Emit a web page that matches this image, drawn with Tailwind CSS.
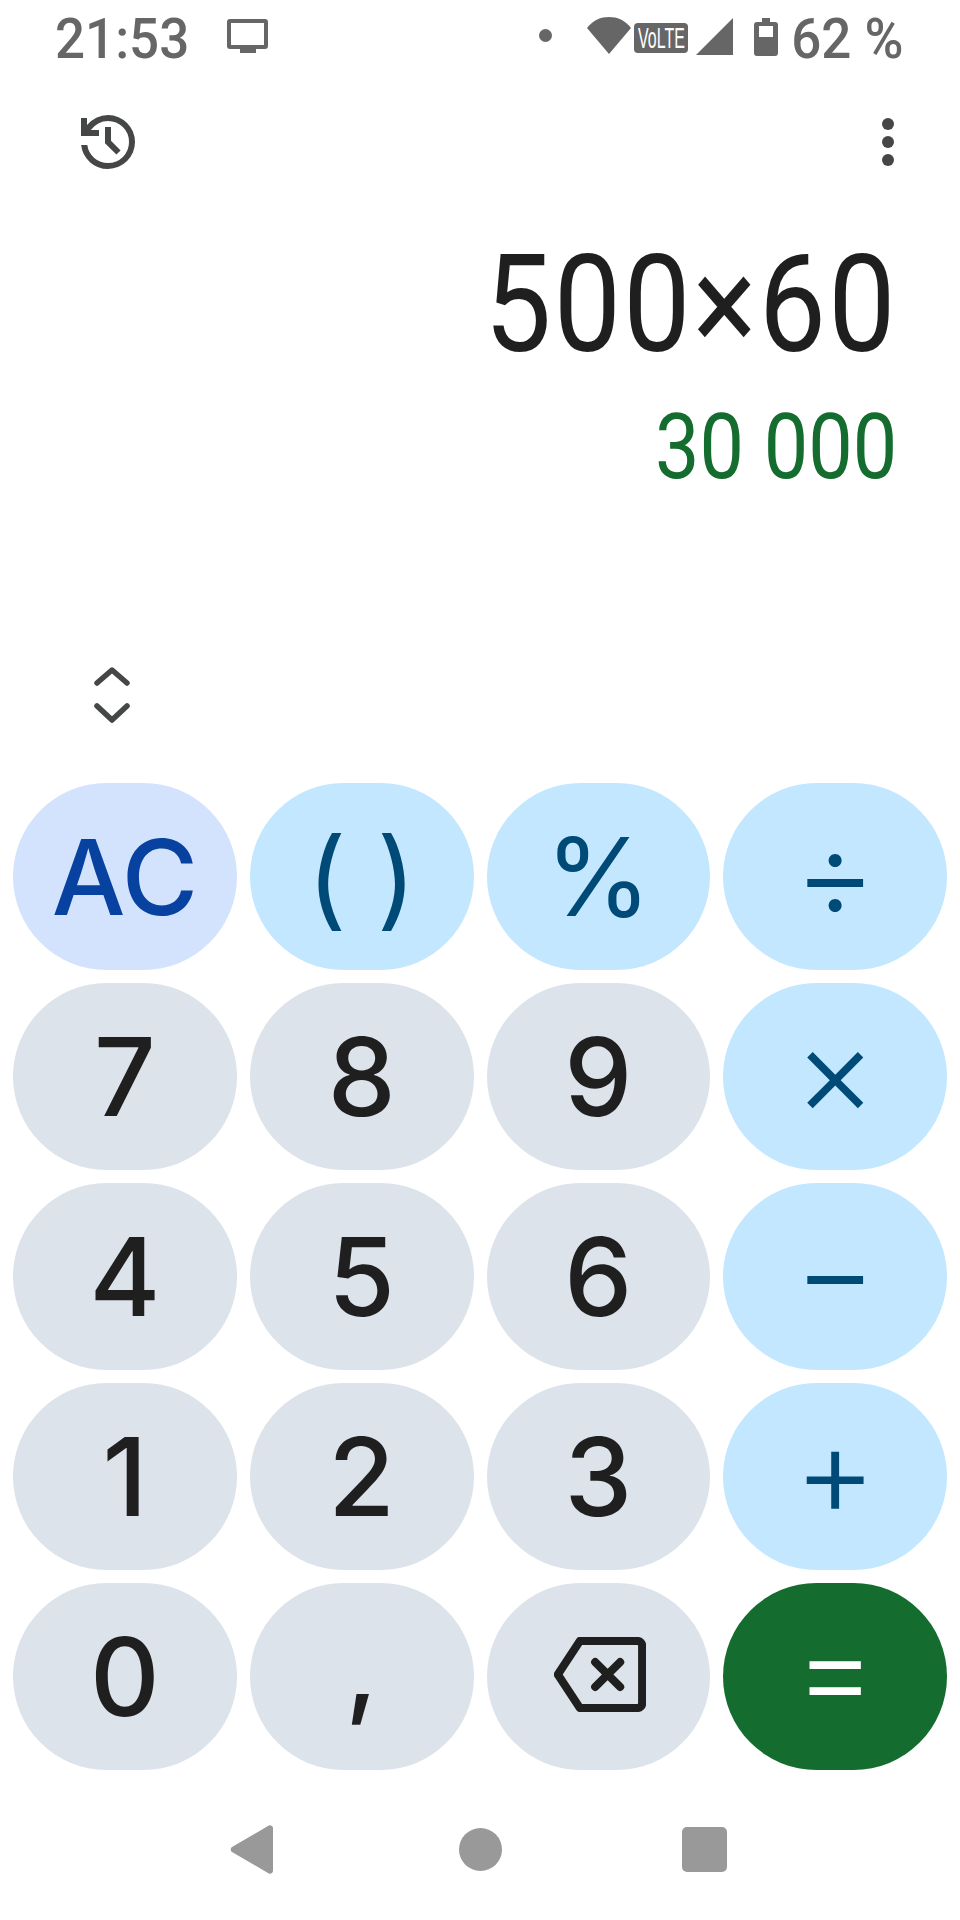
<!DOCTYPE html>
<html lang="en">
<head>
    <meta charset="UTF-8">
    <meta name="viewport" content="width=device-width, initial-scale=1.0">
    <title>Calculator</title>
    <script src="https://cdn.jsdelivr.net/npm/@tailwindcss/browser@4"></script>
</head>
<body class="bg-white">
    <div class="w-[960px] h-[1920px] flex flex-col overflow-hidden font-['Inter',sans-serif]">

        <!-- Status bar -->
        <div class="h-[74px] flex items-center justify-between pl-[55px] pr-[56px] text-[#666666] text-[54px] font-['Roboto',sans-serif]">
            <div class="flex items-center">
                <span class="w-[172px] mt-[2px] font-medium origin-left scale-x-[0.98] scale-y-[1.04]">21:53</span>
                <svg class="w-[41px] h-[34px] -mt-[2px]" viewBox="0 0 41 34" fill="#666666">
                    <path d="M3 0h35a3 3 0 0 1 3 3v24a3 3 0 0 1-3 3h-9v4h-16v-4h-10a3 3 0 0 1-3-3v-24a3 3 0 0 1 3-3zm1 4v22h33v-22z" fill-rule="evenodd"/>
                </svg>
            </div>
            <div class="flex items-center">
                <span class="w-[13px] h-[13px] rounded-full bg-[#666666] mr-[35px] -mt-[4px]"></span>
                <svg class="w-[44px] h-[37px] -mt-[4px] mr-[3px]" viewBox="0 0 44 37" fill="#666666">
                    <path d="M0 11C6 3 14 0 22 0s16 3 22 11L22 37z"/>
                </svg>
                <span class="w-[54px] h-[30px] mt-[2px] mr-[8px] rounded-[4px] bg-[#666666] flex items-center justify-center overflow-hidden">
                    <span class="text-white text-[29px] leading-[30px] whitespace-nowrap font-['Liberation_Sans',sans-serif] scale-x-[0.55]">VoLTE</span>
                </span>
                <svg class="w-[37px] h-[37px] -mt-[1px] mr-[21px]" viewBox="0 0 37 37" fill="#666666">
                    <path d="M37 0v37H0z"/>
                </svg>
                <svg class="w-[24px] h-[38px] -mt-[1px] mr-[11px]" viewBox="0 0 24 38" fill="#666666">
                    <path fill-rule="evenodd" d="M8 0h8v4h5a3 3 0 0 1 3 3v28a3 3 0 0 1-3 3H3a3 3 0 0 1-3-3V7a3 3 0 0 1 3-3h5zM5 8v11h14V8z"/>
                </svg>
                <span class="mt-[2px] font-medium origin-right scale-x-[0.98] scale-y-[1.04]">62 %</span>
            </div>
        </div>

        <!-- Toolbar -->
        <div class="h-[84px] mt-[26px] flex items-center justify-between pl-[72px] pr-[66px]">
            <svg class="w-[72px] h-[72px]" viewBox="0 -960 960 960" fill="#444746">
                <path d="M480-120q-138 0-240.5-91.5T122-440h82q14 104 92.5 172T480-200q117 0 198.5-81.5T760-480q0-117-81.5-198.5T480-760q-69 0-129 32t-101 88h110v80H120v-240h80v94q51-64 124.5-99T480-840q75 0 140.5 28.5t114 77q48.5 48.5 77 114T840-480q0 75-28.5 140.5t-77 114q-48.5 48.5-114 77T480-120Zm112-192L440-464v-216h80v184l128 128-56 56Z"/>
            </svg>
            <div class="flex flex-col gap-[6px]">
                <span class="w-[12px] h-[12px] rounded-full bg-[#444746]"></span>
                <span class="w-[12px] h-[12px] rounded-full bg-[#444746]"></span>
                <span class="w-[12px] h-[12px] rounded-full bg-[#444746]"></span>
            </div>
        </div>

        <!-- Display -->
        <div class="mt-[53px] pr-[62px] flex flex-col items-end font-['Roboto',sans-serif]">
            <div class="h-[136px] leading-[136px] text-[136px] tracking-[2.5px] text-[#1f1f1f] origin-right scale-x-[0.88] whitespace-nowrap">500×60</div>
            <div class="mt-[29px] mr-[1px] h-[92px] leading-[92px] text-[90px] text-[#146c2e] origin-right scale-x-[0.88] whitespace-nowrap">30 000</div>
        </div>

        <!-- Expand chevrons -->
        <div class="mt-[172px] pl-[93px]">
            <svg class="w-[38px] h-[62px]" viewBox="0 0 38 62" fill="none" stroke="#444746" stroke-width="5.5" stroke-linecap="round" stroke-linejoin="round">
                <path d="M4 17 19 4l15 13M4 40l15 14 15-14"/>
            </svg>
        </div>

        <!-- Keypad -->
        <div class="mt-[55px] grid grid-cols-4 auto-rows-[187px] gap-[13px] px-[13px] text-[108px] font-medium text-[#1f1f1f]">
            <button class="rounded-full flex items-center justify-center bg-[#d3e3fd] text-[#0842a0] text-[104px]">AC</button>
            <button class="rounded-full flex items-center justify-center bg-[#c2e7ff] text-[#004a77] font-normal">( )</button>
            <button class="rounded-full flex items-center justify-center bg-[#c2e7ff] text-[#004a77] font-normal">%</button>
            <button class="rounded-full flex items-center justify-center bg-[#c2e7ff] text-[#004a77] text-[126px] font-light pb-[6px]">÷</button>

            <button class="rounded-full flex items-center justify-center bg-[#dde3ea]">7</button>
            <button class="rounded-full flex items-center justify-center bg-[#dde3ea]">8</button>
            <button class="rounded-full flex items-center justify-center bg-[#dde3ea]">9</button>
            <button class="rounded-full flex items-center justify-center bg-[#c2e7ff] text-[#004a77] text-[126px] font-light pb-[12px]">×</button>

            <button class="rounded-full flex items-center justify-center bg-[#dde3ea]">4</button>
            <button class="rounded-full flex items-center justify-center bg-[#dde3ea]">5</button>
            <button class="rounded-full flex items-center justify-center bg-[#dde3ea]">6</button>
            <button class="rounded-full flex items-center justify-center bg-[#c2e7ff] text-[#004a77] text-[126px] font-light pb-[12px]">−</button>

            <button class="rounded-full flex items-center justify-center bg-[#dde3ea]">1</button>
            <button class="rounded-full flex items-center justify-center bg-[#dde3ea]">2</button>
            <button class="rounded-full flex items-center justify-center bg-[#dde3ea]">3</button>
            <button class="rounded-full flex items-center justify-center bg-[#c2e7ff] text-[#004a77] text-[126px] font-light pb-[12px]">+</button>

            <button class="rounded-full flex items-center justify-center bg-[#dde3ea]">0</button>
            <button class="rounded-full flex items-center justify-center bg-[#dde3ea]"><span class="-mt-[22px]">,</span></button>
            <button class="rounded-full flex items-center justify-center bg-[#dde3ea] pb-[4px]">
                <svg class="w-[92px] h-[75px] ml-[3px]" viewBox="0 0 96 78" fill="none" stroke="#1f1f1f" stroke-width="8.5" stroke-linecap="round" stroke-linejoin="round">
                    <path d="M27 4h60a5 5 0 0 1 5 5v60a5 5 0 0 1-5 5H27L4 39z"/>
                    <path d="M43 26l26 26M69 26 43 52"/>
                </svg>
            </button>
            <button class="rounded-full flex items-center justify-center bg-[#146c2e] text-white text-[126px] font-light pb-[16px]">=</button>
        </div>

        <!-- Navigation bar -->
        <div class="mt-[55px] flex items-center pl-[230px]">
            <svg class="w-[43px] h-[49px]" viewBox="0 0 43 49" fill="#999999">
                <path d="M38 1 2 22a3 3 0 0 0 0 5l36 21a3 3 0 0 0 5-2V3a3 3 0 0 0-5-2z"/>
            </svg>
            <span class="ml-[186px] w-[43px] h-[43px] rounded-full bg-[#999999]"></span>
            <span class="ml-[180px] w-[45px] h-[45px] rounded-[5px] bg-[#999999]"></span>
        </div>
    </div>
</body>
</html>
